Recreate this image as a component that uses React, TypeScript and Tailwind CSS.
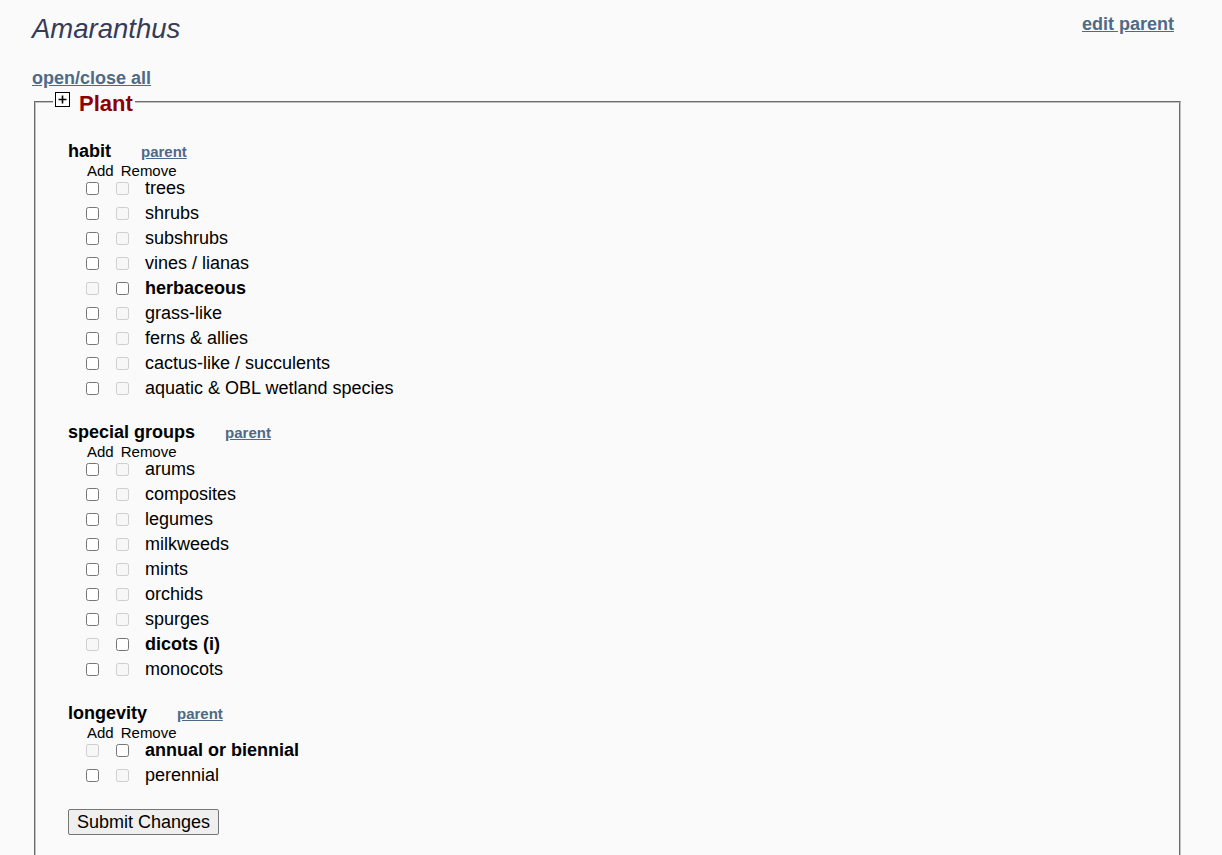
import { useState } from 'react'

type Item = { label: string; has?: boolean }
type Group = { name: string; items: Item[] }

const groups: Group[] = [
  {
    name: 'habit',
    items: [
      { label: 'trees' },
      { label: 'shrubs' },
      { label: 'subshrubs' },
      { label: 'vines / lianas' },
      { label: 'herbaceous', has: true },
      { label: 'grass-like' },
      { label: 'ferns & allies' },
      { label: 'cactus-like / succulents' },
      { label: 'aquatic & OBL wetland species' },
    ],
  },
  {
    name: 'special groups',
    items: [
      { label: 'arums' },
      { label: 'composites' },
      { label: 'legumes' },
      { label: 'milkweeds' },
      { label: 'mints' },
      { label: 'orchids' },
      { label: 'spurges' },
      { label: 'dicots (i)', has: true },
      { label: 'monocots' },
    ],
  },
  {
    name: 'longevity',
    items: [
      { label: 'annual or biennial', has: true },
      { label: 'perennial' },
    ],
  },
]

function PlusBox() {
  return (
    <svg width="15" height="15" viewBox="0 0 15 15" className="block">
      <rect x="0.5" y="0.5" width="14" height="14" fill="#fff" stroke="#000" strokeWidth="1" />
      <path d="M3.5 7.5h8M7.5 3.5v8" stroke="#000" strokeWidth="1.6" />
    </svg>
  )
}

function GroupBlock({ group }: { group: Group }) {
  return (
    <div className="flex flex-col">
      <div className="flex items-start h-[24px] leading-[20px]">
        <span className="font-bold text-[18px] text-black">{group.name}</span>
        <a href="#" className="ml-[30px] text-[15px] font-bold underline text-[#4e6a86] mt-[1px]">parent</a>
      </div>
      <div className="flex h-[11px] items-center pl-[19px] text-[15px] text-black leading-none">
        <span>Add</span>
        <span className="ml-[7px]">Remove</span>
      </div>
      {group.items.map(it => (
        <div key={it.label} className="flex items-center h-[25px]">
          <input type="checkbox" disabled={it.has} className="m-0 ml-[18px] w-[13px] h-[13px]" />
          <input type="checkbox" disabled={!it.has} className="m-0 ml-[17px] w-[13px] h-[13px]" />
          <span className={`ml-[16px] text-[18px] text-black ${it.has ? 'font-bold' : ''}`}>{it.label}</span>
        </div>
      ))}
    </div>
  )
}

export default function App() {
  const [open] = useState(true)
  return (
    <div className="min-h-[855px] bg-[#fafafa] font-['Liberation_Sans',Arial,sans-serif] text-black">
      <div className="flex justify-between pl-[32px] pr-[48px] pt-[14px]">
        <h1 className="italic text-[27.5px] leading-[30px] text-[#363b57]">Amaranthus</h1>
        <a href="#" className="font-bold text-[18px] underline text-[#4e6a86] leading-[20px]">edit parent</a>
      </div>
      <div className="pl-[32px] mt-[23px]">
        <a href="#" className="font-bold text-[18px] underline text-[#4e6a86] leading-[20px]">open/close all</a>
      </div>
      <fieldset className="ml-[34px] mr-[41px] mt-[-2px] border-2 [border-style:groove] border-[rgb(192,192,192)] pb-[40px]">
        <legend className="flex items-start ml-[17px] px-[2px] gap-[9px] h-[26px]">
          <span className="mt-[3px]"><PlusBox /></span>
          <span className="text-[22px] font-bold text-[#8b0000] leading-[26px] mt-[2px]">Plant</span>
        </legend>
        {open && (
          <div className="flex flex-col pl-[32px] pt-[26px] gap-[21px]">
            {groups.map(g => <GroupBlock key={g.name} group={g} />)}
            <div>
              <button className="px-[8px] h-[26px] text-[18px] border border-[#767676] bg-[#efefef] rounded-[2px] leading-none">Submit Changes</button>
            </div>
          </div>
        )}
      </fieldset>
    </div>
  )
}
